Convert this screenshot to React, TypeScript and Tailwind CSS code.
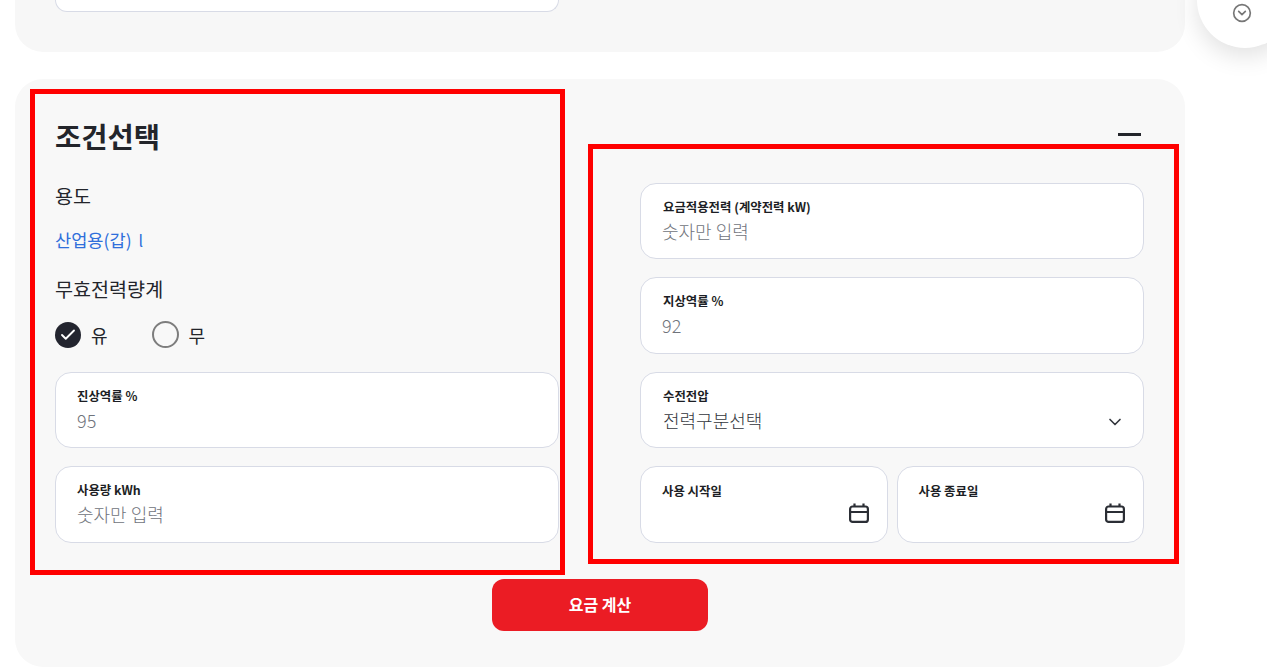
import React from 'react';
import { Check, ChevronDown, CircleChevronDown } from 'lucide-react';

const FONT = 'font-["Noto_Sans_CJK_KR","Noto_Sans",sans-serif]';

interface FieldProps {
  label: string;
  value?: string;
  dark?: boolean;
  tall?: boolean;
  left?: boolean;
}

const Field = ({ label, value, dark, tall, left }: FieldProps) => (
  <div className={`${tall ? 'h-[77px]' : 'h-[76px]'} ${left ? 'pl-[21px]' : 'pl-[22px]'} w-[504px] rounded-2xl border border-[#d8dbe6] bg-white pt-[14px]`}>
    <p className="text-[12.4px] leading-[18px] font-bold text-[#1c1e24]">{label}</p>
    <p className={`mt-[2px] text-[18px] leading-[26px] font-light ${dark ? 'text-[#33363d]' : 'text-[#6f737b]'} ${!dark && !left ? '-ml-px' : ''}`}>
      {value}
    </p>
  </div>
);

// calendar with short ticks, lucide's has long ones
const CalendarIcon = () => (
  <svg viewBox="0 0 20 20" fill="none" stroke="#2b2e35" strokeWidth="2.2" className="mt-[3px] ml-auto h-[20px] w-[20px]">
    <rect x="1.1" y="3.5" width="17.8" height="15.4" rx="2.5" />
    <path d="M1 9h18M5.5 .5v3.5M14.5 .5v3.5" />
  </svg>
);

const DateField = ({ label }: { label: string }) => (
  <div className="flex h-[77px] flex-1 flex-col rounded-2xl border border-[#d8dbe6] bg-white pt-[15px] pr-[18px] pl-[21px]">
    <p className="text-[12.4px] leading-[18px] font-bold text-[#1c1e24]">{label}</p>
    <CalendarIcon />
  </div>
);

export default function App() {
  return (
    <div className={`relative h-[667px] w-full overflow-hidden bg-white ${FONT}`}>
      {/* previous section, scrolled off */}
      <div className="ml-[15px] flex h-[52px] w-[1170px] items-start rounded-b-[28px] bg-[#f7f7f7] pl-[40px]">
        <div className="h-[12px] w-[504px] rounded-b-2xl border border-t-0 border-[#d8dbe6] bg-white" />
      </div>

      <div className="relative mt-[27px] ml-[15px] h-[588px] w-[1170px] rounded-[28px] bg-[#f8f8f8]">
        <div className="flex items-start pt-[10px] pl-[15px]">
          <div className="h-[486px] w-[535px] border-[5px] border-[#ff0000] pl-[20px]">
            <h2 className="mt-[21px] text-[28.5px] leading-[42px] font-bold text-[#23252b]">조건선택</h2>
            <p className="mt-[26px] text-[19.6px] leading-[26px] text-[#23252b]">용도</p>
            <p className="mt-[18px] text-[17.6px] leading-[26px] text-[#2f6fdb]">
              산업용(갑) <span className="ml-[3px] text-[16px] leading-none">l</span>
            </p>
            <p className="mt-[23px] text-[19.6px] leading-[26px] text-[#23252b]">무효전력량계</p>
            <div className="mt-[19px] flex items-center">
              <span className="flex h-[26px] w-[26px] items-center justify-center rounded-full bg-[#23252f]">
                <Check className="h-[18px] w-[18px] text-white" strokeWidth={2.5} />
              </span>
              <span className="ml-[10px] text-[18px] leading-[26px] text-[#23252b]">유</span>
              <span className="ml-[44px] h-[27px] w-[27px] rounded-full border-2 border-[#7d7d7d]" />
              <span className="ml-[10px] text-[18px] leading-[26px] text-[#23252b]">무</span>
            </div>
            <div className="mt-[24px] flex flex-col gap-[18px]">
              <Field label="진상역률 %" value="95" left />
              <Field label="사용량 kWh" value="숫자만 입력" tall left />
            </div>
          </div>

          <div className="mt-[55px] ml-[23px] flex h-[420px] w-[591px] flex-col gap-[18px] border-[5px] border-[#ff0000] pt-[34px] pl-[47px]">
            <Field label="요금적용전력 (계약전력 kW)" value="숫자만 입력" />
            <Field label="지상역률 %" value="92" tall />
            <div className="relative">
              <Field label="수전전압" value="전력구분선택" dark />
              <ChevronDown className="absolute top-[40px] left-[465px] h-[20px] w-[20px] text-[#33363d]" strokeWidth={2} />
            </div>
            <div className="flex w-[504px] gap-[9px]">
              <DateField label="사용 시작일" />
              <DateField label="사용 종료일" />
            </div>
          </div>
        </div>

        {/* collapse toggle */}
        <span className="absolute top-[54px] left-[1103px] h-[3px] w-[23px] bg-[#23252b]" />

        <button className="absolute top-[500px] left-[477px] h-[52px] w-[216px] rounded-xl bg-[#eb1c24] pb-[3px] text-[16px] font-bold text-white">
          요금 계산
        </button>
      </div>

      {/* floating button */}
      <div className="absolute top-[-48px] left-[1197px] flex h-[96px] w-[96px] items-end rounded-full bg-white pb-[25px] pl-[35px] shadow-[0_8px_24px_rgba(0,0,0,0.12)]">
        <CircleChevronDown className="h-[20px] w-[20px] text-[#777777]" strokeWidth={2} />
      </div>
    </div>
  );
}
